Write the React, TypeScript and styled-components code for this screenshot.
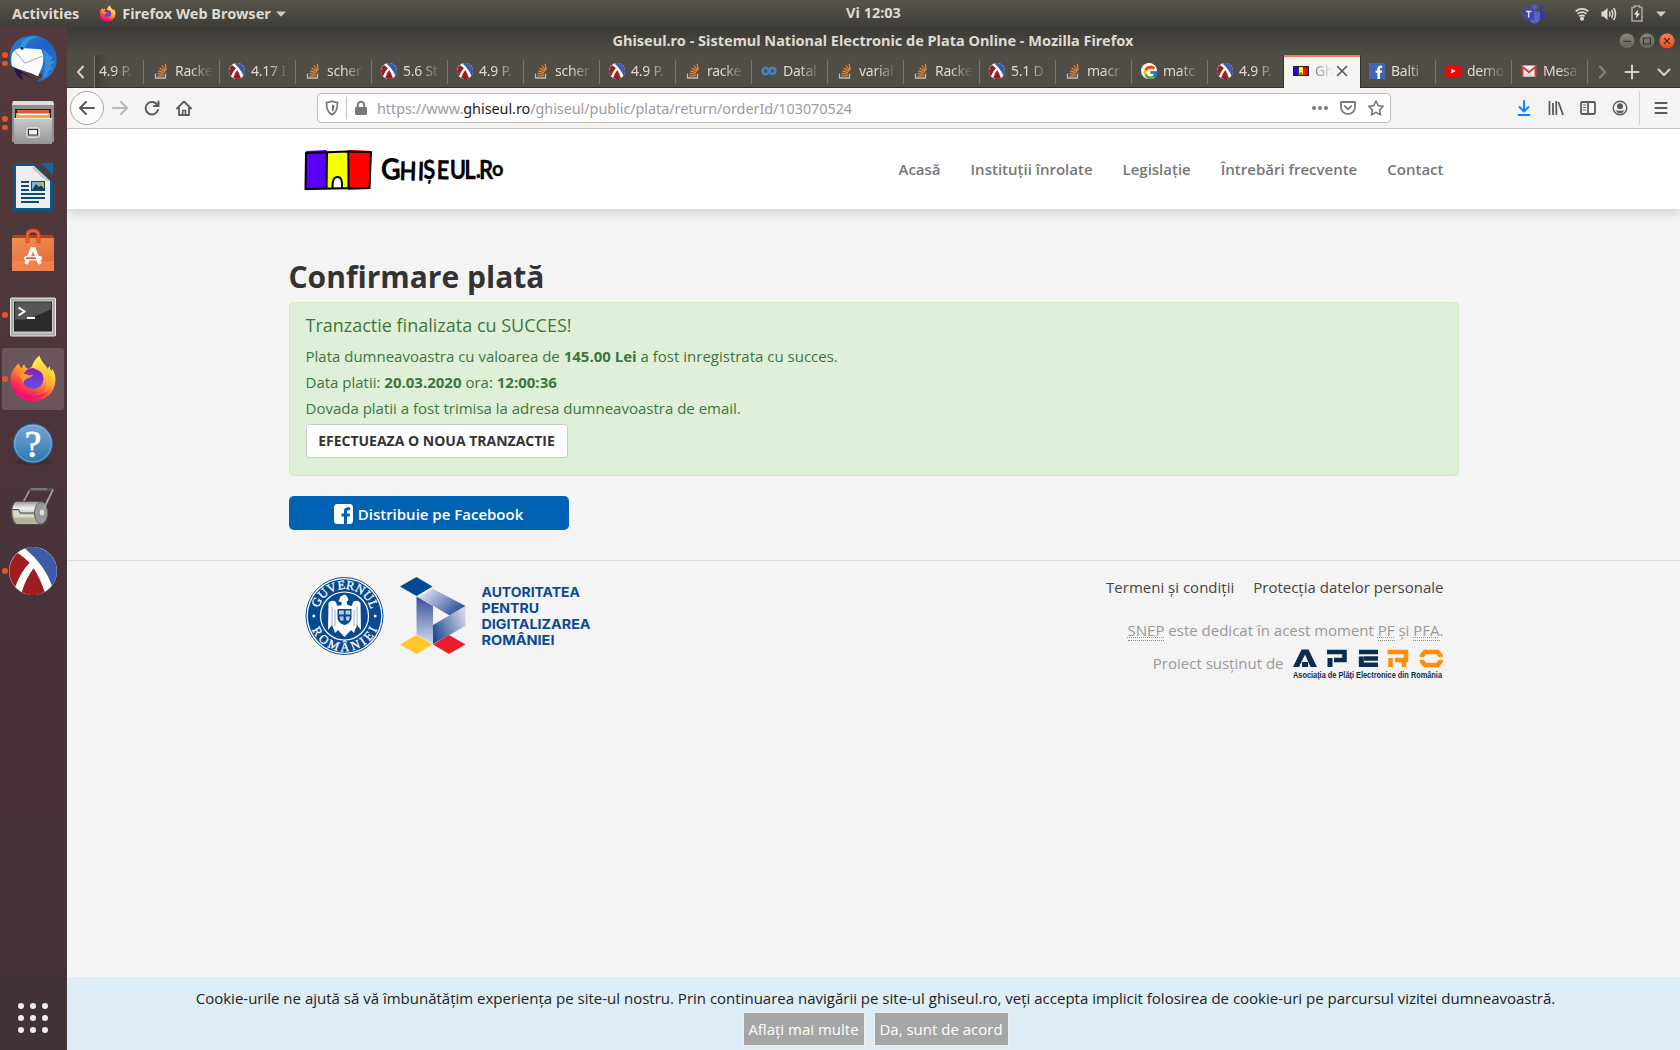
import React from "react";
import styled, { createGlobalStyle } from "styled-components";
import { FcGoogle } from "react-icons/fc";

const Global = createGlobalStyle`
  * { box-sizing: border-box; }
  html, body { margin: 0; padding: 0; }
  body { width: 1680px; height: 1050px; overflow: hidden; font-family: "Open Sans", "Noto Sans", sans-serif; }
  svg { display: block; flex: none; }
`;

const Desktop = styled.div`
  width: 1680px;
  height: 1050px;
  display: flex;
  flex-direction: column;
  background: #f4f4f4;
`;

/* ---------- GNOME top panel ---------- */

const Panel = styled.header`
  height: 27px;
  flex: none;
  display: grid;
  grid-template-columns: 1fr auto 1fr;
  align-items: center;
  padding: 0 14px 0 12px;
  background: linear-gradient(#58554c, #3e3d39);
  color: #dfdbd2;
  font: 700 14.5px/27px "Noto Sans", sans-serif;
`;

const PanelLeft = styled.div`
  display: flex;
  align-items: center;
`;

const PanelText = styled.span`
  white-space: nowrap;
`;

const Clock = styled(PanelText)`
  margin-left: 69px;
  line-height: 25px;
  padding-bottom: 2px;
`;

const PanelRight = styled.div`
  display: flex;
  align-items: center;
  justify-content: flex-end;
`;

const Pad = styled.div<{ $l?: number; $r?: number; $t?: number }>`
  flex: none;
  padding-left: ${(p) => p.$l ?? 0}px;
  padding-right: ${(p) => p.$r ?? 0}px;
  padding-top: ${(p) => p.$t ?? 0}px;
`;

const Body = styled.div`
  flex: 1;
  display: flex;
  min-height: 0;
`;

/* ---------- Dock ---------- */

const Dock = styled.nav`
  width: 67px;
  flex: none;
  display: flex;
  flex-direction: column;
  background: linear-gradient(#543a3c 0%, #4c363a 30%, #47323a 60%, #45313a 90%, #403236 94%, #403236 100%);
`;

const Slot = styled.div<{ $active?: boolean }>`
  width: 62px;
  height: 62px;
  margin: 1px 0 1px 2px;
  border-radius: 3px;
  display: grid;
  grid-template-columns: 7px 48px 7px;
  align-items: center;
  background: ${(p) => (p.$active ? "#6a555a" : "transparent")};
`;

const Running = styled.div`
  display: flex;
  flex-direction: column;
  gap: 3px;
`;

const Dot = styled.i`
  width: 5.5px;
  height: 5.5px;
  border-radius: 50%;
  background: #e95420;
`;

const AppsGrid = styled.div`
  margin: auto 0 17px 18px;
  display: grid;
  grid-template-columns: repeat(3, 6px);
  gap: 6px;
`;

const AppsDot = styled.i`
  width: 6px;
  height: 6px;
  border-radius: 50%;
  background: #eee;
`;

/* ---------- Firefox window ---------- */

const Win = styled.section`
  flex: 1;
  min-width: 0;
  display: flex;
  flex-direction: column;
`;

const TitleBar = styled.div`
  height: 28px;
  flex: none;
  display: grid;
  grid-template-columns: 1fr auto 1fr;
  align-items: center;
  padding: 0 5px;
  background: linear-gradient(#3a3935, #504d46);
  color: #dfdbd2;
  font: 700 14.53px/26px "Noto Sans", sans-serif;
`;

const WinTitle = styled.span`
  padding: 0 1px 2px 0;
  white-space: nowrap;
`;

const WinButtons = styled.div`
  display: flex;
  justify-content: flex-end;
  gap: 4px;
`;

const TabStrip = styled.div`
  height: 33px;
  flex: none;
  display: flex;
  background: #504d46;
  box-shadow: inset 0 -1px 0 #33322f;
  color: #dfdbd2;
`;

const TabScroll = styled.div<{ $w: number; $shadow?: boolean }>`
  width: ${(p) => p.$w}px;
  flex: none;
  display: flex;
  align-items: center;
  justify-content: center;
  border-right: ${(p) => (p.$shadow ? "1px solid #7b7871" : "none")};
`;

const TabBox = styled.div<{ $active?: boolean; $first?: boolean; $last?: boolean }>`
  width: ${(p) => (p.$first ? 49 : 76)}px;
  flex: none;
  display: flex;
  align-items: center;
  padding: 0 0 2px ${(p) => (p.$first ? 4 : 9)}px;
  color: ${(p) => (p.$active ? "#777" : "#dfdbd2")};
  background: ${(p) =>
    p.$active
      ? "linear-gradient(#f27e51 0 2px, #f5f4f3 2px)"
      : p.$first
        ? "linear-gradient(#77746c, #77746c) 100% 5px / 1px 24px no-repeat, linear-gradient(90deg, #403e39, #504d46 12px) 0 0 / 100% 32px no-repeat"
        : p.$last
          ? "none"
          : "linear-gradient(#77746c, #77746c) 100% 5px / 1px 24px no-repeat"};
  box-shadow: ${(p) => (p.$active ? "-1px 0 0 #33322f, 1px 0 0 #33322f" : "none")};
  & > svg { margin-top: 1px; }
`;

const TabLabel = styled.span<{ $w: number; $first?: boolean }>`
  width: ${(p) => p.$w}px;
  margin-left: ${(p) => (p.$first ? 0 : 6)}px;
  overflow: hidden;
  white-space: nowrap;
  font: 400 14px/22px "Noto Sans", sans-serif;
  letter-spacing: -0.25px;
  mask-image: linear-gradient(to left, transparent, #000 22px);
`;

const Toolbar = styled.div`
  height: 41px;
  flex: none;
  display: flex;
  align-items: center;
  background: #f5f4f2;
  border-bottom: 1px solid #c4c0bc;
  padding: 0 11px 0 3px;
`;

const BackButton = styled.div`
  width: 34px;
  height: 34px;
  border-radius: 50%;
  border: 1px solid #a9a7a5;
  background: #fcfcfc;
  display: grid;
  place-items: center;
`;

const UrlBar = styled.div`
  width: 1074px;
  height: 30px;
  margin-left: 125px;
  display: flex;
  align-items: center;
  background: #fff;
  border: 1px solid #bfbbb7;
  border-radius: 4px;
  padding: 0 6px 0 6px;
`;

const UrlSep = styled.i`
  width: 1px;
  height: 22px;
  margin: 0 6px;
  background: #c5c3c1;
`;

const Url = styled.span`
  margin-left: 8px;
  padding-top: 1px;
  font: 400 14.42px/27px "Noto Sans", sans-serif;
  letter-spacing: -0.05px;
  color: #9c9c9c;
  flex: 1;
  & b { font-weight: 400; color: #222; }
`;

const UrlActions = styled.div`
  display: flex;
  align-items: center;
  gap: 12px;
`;

const ToolIcons = styled.div`
  margin-left: auto;
  display: flex;
  align-items: center;
  gap: 16px;
`;

const ToolSep = styled.i`
  width: 1px;
  height: 34px;
  margin: 0 -3px 0 -5px;
  background: #d6d3d0;
`;

/* ---------- Page ---------- */

const Page = styled.div`
  flex: 1;
  min-height: 0;
  display: flex;
  flex-direction: column;
  background: #f4f4f4;
`;

const SiteHeader = styled.div`
  height: 80px;
  flex: none;
  background: #fff;
  box-shadow: 0 2px 12px rgba(0, 0, 0, 0.2);
  clip-path: inset(0 0 -20px 0);
`;

const Container = styled.div`
  width: 1170px;
  margin: 0 auto;
`;

const HeaderRow = styled(Container)`
  height: 80px;
  display: flex;
  align-items: center;
  justify-content: space-between;
  padding: 0 15px 1px;
`;

const Menu = styled.div`
  display: flex;
  gap: 30px;
  font: 600 15px/20px "Open Sans", sans-serif;
  color: #777;
`;

const Heading = styled.h1`
  margin: 48px 0 0;
  font: 700 30px/40px "Open Sans", sans-serif;
  color: #333;
`;

const Alert = styled.div`
  margin-top: 5px;
  height: 174px;
  padding: 10px 16px;
  border: 1px solid #d6e9c6;
  border-radius: 4px;
  background: #dff0d8;
  color: #3c763d;
  font: 400 15px/26px "Open Sans", sans-serif;
`;

const AlertTitle = styled.div`
  font-size: 18px;
  line-height: 24px;
  margin-bottom: 6px;
`;

const Line = styled.p`
  margin: 0;
`;

const NewButton = styled.button`
  display: block;
  width: 262px;
  height: 34px;
  margin: 3px 0 0;
  padding: 0;
  border: 1px solid #ccc;
  border-radius: 3px;
  background: #fff;
  color: #333;
  font: 700 14px/32px "Open Sans", sans-serif;
  white-space: nowrap;
`;

const ShareButton = styled.button`
  width: 280px;
  height: 34px;
  margin-top: 20px;
  padding: 2px 0 0;
  border: 0;
  border-radius: 5px;
  background: #0062b3;
  color: #fff;
  display: flex;
  align-items: center;
  justify-content: center;
  gap: 5px;
  font: 600 15px/32px "Open Sans", sans-serif;
`;

const Footer = styled.footer`
  margin-top: 30px;
  border-top: 1px solid #dedede;
`;

const FooterRow = styled(Container)`
  display: flex;
  justify-content: space-between;
  padding: 16px 15px 0 16px;
`;

const Logos = styled.div`
  display: flex;
  gap: 16px;
`;

const AdrText = styled.div`
  padding-top: 6px;
`;

const FooterRight = styled.div`
  display: flex;
  flex-direction: column;
  align-items: flex-end;
  font: 400 15px/20px "Open Sans", sans-serif;
  color: #999;
`;

const Links = styled.div`
  display: flex;
  gap: 19px;
  color: #444;
`;

const Snep = styled.div`
  margin-top: 23px;
`;

const Abbr = styled.abbr`
  text-decoration: underline dotted 1px;
  border-bottom: 1px dotted #888;
`;

const Sustained = styled.div`
  margin-top: 9px;
  display: flex;
  gap: 9px;
  line-height: 28px;
`;

const CookieBar = styled.div`
  margin-top: auto;
  height: 73px;
  flex: none;
  background: #ddeef6;
  color: #222;
  text-align: center;
  padding: 8px 0 0 4px;
  font: 400 15px/26px "Open Sans", sans-serif;
`;

const CookieButtons = styled.div`
  display: flex;
  justify-content: center;
  gap: 9px;
  padding-top: 1px;
`;

const CookieButton = styled.button<{ $w: number }>`
  width: ${(p) => p.$w}px;
  height: 34px;
  padding: 0;
  border: 1px solid #f0f0f0;
  background: #a6a6a6;
  color: #fff;
  font: 400 15px/30px "Open Sans", sans-serif;
`;

/* ---------- Icons ---------- */

const Racket = ({ s = 16 }: { s?: number }) => (
  <svg width={s} height={s} viewBox="0 0 48 48">
    <circle cx="24" cy="24" r="24" fill="#fff" />
    <path d="M16 1.4A24 24 0 0 1 42.9 38.7Q36 18 16 1.4Z" fill="#3e5ba9" />
    <path d="M8.6 6A24 24 0 0 0 6.2 40Q11.500 25 20.700 15.700Q15 10 8.600 6Z" fill="#9f1d20" />
    <path d="M24.600 21.300Q16.500 32 12.800 45.200A24 24 0 0 0 35.600 45Q31.500 32 24.600 21.300Z" fill="#9f1d20" />
  </svg>
);

const Stack = () => (
  <svg width="16" height="16" viewBox="0 0 16 16" fill="none">
    <path d="M2.500 10.500v4.500h10v-4.500" stroke="#bcbbbb" strokeWidth="1.300" />
    <path d="M4.300 12.800h6.400M4.500 10.400l6.300.7M5.200 7.900l6 1.800M6.600 5.100l5.500 3.300M9 2.600l3.800 5M12.200.8l1.100 6" stroke="#f48024" strokeWidth="1.300" />
  </svg>
);

const Coursera = () => (
  <svg width="16" height="16" viewBox="0 0 16 16" fill="none" stroke="#3f84c9" strokeWidth="2.600">
    <path d="M6.800 10.200C5.300 12 1.600 11.300 1.600 8s3.700-4 5.200-2.200L9 9.800c1.400 2 5.300 1.500 5.300-1.800S10.500 4.200 9.200 6L7 10" />
  </svg>
);

const RoFlag = () => (
  <svg width="16" height="16" viewBox="0 0 16 16">
    <rect x=".5" y="3.500" width="15" height="9" fill="#ff0" stroke="#222" />
    <path d="M1 4h4.500v8H1z" fill="#2200e8" />
    <path d="M10.500 4H15v8h-4.500z" fill="#f00" />
    <path d="M5.500 4v8m5-8v8M7 12v-2h1.800v2" stroke="#222" strokeWidth=".8" fill="none" />
  </svg>
);

const FbTab = () => (
  <svg width="16" height="16" viewBox="0 0 16 16">
    <path fill="#4267b2" d="M0 0h16v16H0z" />
    <path fill="#fff" d="M8.400 16V9.800H6.600V7.400h1.800V5.700c0-2 1.200-3 3-3h1.700v2.200H12c-.9 0-1.100.5-1.100 1.100v1.400h2.200l-.3 2.400h-1.900V16z" />
  </svg>
);

const YouTube = () => (
  <svg width="16" height="16" viewBox="0 0 16 16">
    <rect y="2.300" width="16" height="11.400" rx="2.800" fill="#f00" />
    <path d="M6.300 5.600v4.800L10.600 8z" fill="#fff" />
  </svg>
);

const Gmail = () => (
  <svg width="16" height="16" viewBox="0 0 16 16">
    <rect x="1" y="2.500" width="14" height="11" rx="1" fill="#f2f2f2" />
    <path d="M3 13.500 8 8l5 5.500" fill="#d8d8d8" />
    <path d="M1.500 13V3.800L8 9.300l6.500-5.500V13" fill="none" stroke="#dc3c30" strokeWidth="2" />
  </svg>
);

const GoogleTab = () => (
  <svg width="16" height="16" viewBox="0 0 16 16">
    <circle cx="8" cy="8" r="8" fill="#fff" />
    <FcGoogle x="1.500" y="1.500" width="13" height="13" />
  </svg>
);

const Firefox = ({ s }: { s: number }) => (
  <svg width={s} height={s} viewBox="0 0 48 48">
    <defs>
      <linearGradient id={`fa${s}`} x1=".85" y1=".1" x2=".25" y2="1">
        <stop offset="0" stopColor="#fff44f" />
        <stop offset=".35" stopColor="#ffa436" />
        <stop offset=".6" stopColor="#ff5634" />
        <stop offset=".85" stopColor="#f5156c" />
      </linearGradient>
      <linearGradient id={`fb${s}`} x1=".5" y1="0" x2=".3" y2="1">
        <stop offset="0" stopColor="#8a1fb8" />
        <stop offset="1" stopColor="#5b55e8" />
      </linearGradient>
      <linearGradient id={`fc${s}`} x1=".5" y1="0" x2=".6" y2="1">
        <stop offset="0" stopColor="#fff44f" />
        <stop offset="1" stopColor="#ff9a28" />
      </linearGradient>
    </defs>
    <path d="M9.500 8.500c1 2.500 2 3.700 3.500 4.700.3-1.800 1-3 2.300-4.200.4 2.500 1.500 4 4 5L31 6c2 2.500 5 5 7 9l2.500-4c.5 2 .8 3.500 1.700 5l1.300-2C46 18 46.500 22 46.500 25a22.500 21.500 0 0 1-45 0c0-7 3.500-12 8-16.500Z" fill={`url(#fa${s})`} />
    <circle cx="24" cy="23.500" r="10.500" fill={`url(#fb${s})`} />
    <path d="M22.500 12.500C24 7 27 3 30.500.5 31.500 6 36 9 39 14c5 8 3 19-4 23 5-8 2-17-3-20-3-2-6-3.500-9.500-4.500Z" fill={`url(#fc${s})`} />
    <path d="M8 19.500c4-1.500 8-1 11 .5 2 1 3.500 0 5-.2-1.500 3-4.500 3-6.500 4-2 1-2.500 2.500-3 4.200-1-4-3.500-6.500-6.500-8.500Z" fill="#ff9a1f" />
    <path d="M3 31c5 13 25 18 38 4-8 7-28 10-38-4Z" fill="#e8127a" opacity=".8" />
  </svg>
);

const Thunderbird = () => (
  <svg width="48" height="48" viewBox="0 0.800 48 48">
    <defs>
      <linearGradient id="tb" x1="0" y1="0" x2="1" y2="1">
        <stop offset="0" stopColor="#2b7fd6" />
        <stop offset=".5" stopColor="#2060c4" />
        <stop offset="1" stopColor="#2a7bd0" />
      </linearGradient>
    </defs>
    <path d="M5 33c1 6 4 11 9 13l-2-7 14 6Z" fill="#261659" />
    <path d="M12 4C22-1 36 1 43 11c7 9 6 22-1 29-4 5-9 7-15 7 5-2 6-4 7-7L2 32C-2 20 3 8 12 4Z" fill="url(#tb)" />
    <path d="M11 13C13 4 22 0 31 3c-8 0-13 4-15 10L11 22l-5-3Z" fill="#3498d8" />
    <path d="M33 14c5 3 8 9 11 9l-3 4 5 0-5 5 3 2-6 4 1 3-6 3c4-9 4-19 0-30Z" fill="#3b98dc" opacity=".8" />
    <path d="M3 20c2-5 7-7 12-6l17 1c3 5 3 12 1 18l-4 9c-8-4-18-6-26-10-1-4-1-8 0-12Z" fill="#fbfbfb" />
    <path d="m6 17 10 12 17-7" fill="none" stroke="#999" strokeWidth=".9" />
    <circle cx="13" cy="14" r="1.500" fill="#142850" />
  </svg>
);

const Files = () => (
  <svg width="48" height="48" viewBox="0 0 48 48">
    <defs>
      <linearGradient id="fi" x1="0" y1="0" x2="0" y2="1">
        <stop offset="0" stopColor="#c9c9c9" />
        <stop offset="1" stopColor="#959595" />
      </linearGradient>
    </defs>
    <path d="M4 2h40l1 4v37H3V6z" fill="#8e8e8e" />
    <path d="M4 2h40l1 4H3z" fill="#dedede" />
    <path d="M6 10h36v12H6z" fill="#242424" />
    <path d="M8 11h32v9H8z" fill="#e0592a" />
    <path d="M7 14h34v6H7z" fill="#f6a64b" />
    <path d="M9 15h30v1H9z" fill="#fff" />
    <path d="M5 19h38v26H5z" fill="url(#fi)" />
    <path d="M5 19h38v1H5z" fill="#eee" />
    <rect x="17.500" y="28.500" width="13" height="10" rx="2" fill="#bbb" stroke="#dcdcdc" />
    <rect x="19.500" y="30.500" width="9" height="5.500" fill="#eee" stroke="#333" />
  </svg>
);

const Writer = () => (
  <svg width="48" height="48" viewBox="0 0 48 48">
    <path d="M6 0h19l19 19v27a2 2 0 0 1-2 2H6a2 2 0 0 1-2-2V2a2 2 0 0 1 2-2Z" fill="#0b5687" />
    <path d="M32 0h12v12Z" fill="#0b6aa5" />
    <path d="M7 3h18l16 15v27H7z" fill="#eee" />
    <path d="m25 3 16 15h-4L23 5Z" fill="#c9c9c9" />
    <path d="M12 19h8m-8 4h8m-8 4h8m-8 4h24m-24 4h24m-24 4h18" stroke="#0b4c76" strokeWidth="2" />
    <path d="M22 18h14v10H22z" fill="#0b4c76" />
    <path d="M23 19h12v8H23z" fill="#79b9df" />
    <path d="m23 27 4-6 3 3 2-2 3 4v1Z" fill="#333" />
    <circle cx="33" cy="21" r="2" fill="#d9b42c" />
  </svg>
);

const Software = () => (
  <svg width="48" height="48" viewBox="0 -1 48 48">
    <defs>
      <linearGradient id="sw" x1="0" y1="0" x2=".5" y2="1">
        <stop offset="0" stopColor="#ec9353" />
        <stop offset="1" stopColor="#ea6a35" />
      </linearGradient>
    </defs>
    <path d="M4 7h40l1 5H3z" fill="#b83d15" />
    <path d="M3 10h42v33H3z" fill="url(#sw)" />
    <path d="M3 33h42v10H3z" fill="#f5864f" opacity=".8" />
    <path d="M18.500 15V7q0-4.500 5.500-4.500T29.500 7v8" fill="none" stroke="#c84a1e" strokeWidth="4" />
    <path d="M18.500 14V7q0-4 5.500-4t5.500 4v7" fill="none" stroke="#f0652f" strokeWidth="2" />
    <path d="m17 36 6-15h2l6 15" fill="none" stroke="#fff" strokeWidth="3.600" />
    <rect x="15" y="28" width="18" height="4.500" rx="2.200" fill="#fff" />
    <path d="M17 30.200h10" stroke="#e05c28" strokeWidth="1.800" />
  </svg>
);

const Terminal = () => (
  <svg width="48" height="48" viewBox="0 -1.500 48 48">
    <rect x="1.500" y="5.500" width="45" height="38" rx="1" fill="#aaa" stroke="#e9e9e9" />
    <path d="M4 8h40v33H4z" fill="#c9c9c9" />
    <path d="M5 9h38v30H5z" fill="#2a2a2a" />
    <path d="M6 10h36v7L18 27H6z" fill="#565656" />
    <path d="m9.500 15 6 4-6 4M18 25.500h8" fill="none" stroke="#fff" strokeWidth="2" />
  </svg>
);

const HelpText = styled.text`
  font: 400 37px "Liberation Serif", serif;
`;

const Help = () => (
  <svg width="48" height="48" viewBox="0 0 48 48">
    <defs>
      <linearGradient id="hp" x1="0" y1="0" x2="0" y2="1">
        <stop offset="0" stopColor="#7ba5da" />
        <stop offset="1" stopColor="#2d76b0" />
      </linearGradient>
    </defs>
    <ellipse cx="24" cy="43" rx="19" ry="3" fill="#000" opacity=".15" />
    <circle cx="24" cy="24.500" r="19.500" fill="url(#hp)" stroke="#2864a0" />
    <circle cx="24" cy="24.500" r="18.300" fill="none" stroke="#9bc0e8" strokeWidth=".8" opacity=".8" />
    <HelpText x="24" y="37.500" textAnchor="middle" fill="#fff" stroke="#fff" strokeWidth=".8">?</HelpText>
  </svg>
);

const Roller = () => (
  <svg width="48" height="48" viewBox="0 -2.500 48 48">
    <defs>
      <linearGradient id="rl" x1="0" y1="0" x2="0" y2="1">
        <stop offset="0" stopColor="#999" />
        <stop offset=".3" stopColor="#f0f0f0" />
        <stop offset="1" stopColor="#777" />
      </linearGradient>
    </defs>
    <path d="M14 17 21 4M44 4 33 27" stroke="#656860" strokeWidth="2.200" fill="none" />
    <path d="m14 17 7-13M44 4 33 27" stroke="#b9bbb5" strokeWidth=".9" fill="none" />
    <path d="M20 4h25" stroke="#555" strokeWidth="3" />
    <path d="M22 3.500h16" stroke="#999" strokeWidth="1" />
    <path d="M7 16h26c7 3 7 20-1 23H7C1 36 1 19 7 16Z" fill="url(#rl)" stroke="#555" />
    <path d="M2.500 24h7l2 3.500H27c0 6 2 9 4 11.500H8C4 37 2.500 31 2.500 24Z" fill="#b4b597" stroke="#4c4c40" />
    <path d="M4 25.500h5l2 3.500h14v3H5Z" fill="#dcdccb" />
    <ellipse cx="32" cy="27.500" rx="6.500" ry="11" fill="#989898" stroke="#666" />
    <path d="M44 4 33 27" stroke="#a5a7a1" strokeWidth="1.500" />
    <ellipse cx="33" cy="27" rx="2.200" ry="3" fill="#ddd" />
  </svg>
);

const Teams = () => (
  <svg width="22" height="20" viewBox="0 0 22 20">
    <circle cx="11.500" cy="3.200" r="3" fill="#5059c9" />
    <circle cx="18.500" cy="4" r="2.200" fill="#3b3f9f" />
    <path d="M16 7.500h6V13q-1 4-5 3z" fill="#353a96" />
    <path d="M8 7.500h9V14q-.5 5.500-5.500 5.500T7 15Z" fill="#5a62c9" />
    <path d="M0 4.500h11V16H0z" fill="#4044b2" />
    <path d="M3 7.500h5.500M5.700 7.500v6" stroke="#ddd" strokeWidth="1.500" />
  </svg>
);

const Wifi = () => (
  <svg width="14" height="14" viewBox="0 0 14 14" fill="none" stroke="#dfdbd2" strokeWidth="1.700">
    <path d="M.7 4.200q6.300-4.600 12.600 0M2.500 6.800q4.500-3.200 9 0M4.300 9.300q2.700-1.800 5.400 0" />
    <circle cx="7" cy="11.800" r="1.200" fill="#dfdbd2" />
  </svg>
);

const Sound = () => (
  <svg width="16" height="14" viewBox="0 0 16 14" fill="none" stroke="#dfdbd2" strokeWidth="1.500">
    <path d="M.5 4.500h2L6.500 1v12l-4-3.500h-2z" fill="#dfdbd2" stroke="none" />
    <path d="M8.300 4.500q1.400 2.500 0 5M10.500 2.800q2.500 4.200 0 8.400M12.700 1q3.600 6 0 12" />
  </svg>
);

const Battery = () => (
  <svg width="12" height="17" viewBox="0 0 12 17" fill="none">
    <path d="M3.500 2.500V1h5v1.500H11V16H1V2.500Z" stroke="#a9a69f" strokeWidth="1.600" />
    <path d="M7 4.500 3 9.500h2.500L5 13.500l4-5H6.500Z" fill="#eee" />
  </svg>
);

const Caret = () => (
  <svg width="10" height="6" viewBox="0 0 10 6">
    <path d="M0 .5h10L5 5.800z" fill="#cfccc4" />
  </svg>
);

const WinBtn = ({ kind }: { kind: "min" | "max" | "close" }) => (
  <svg width="16" height="16" viewBox="0 0 16 16">
    <defs>
      <linearGradient id={`wb-${kind}`} x1="0" y1="0" x2="0" y2="1">
        <stop offset="0" stopColor={kind === "close" ? "#f4845f" : "#8b8881"} />
        <stop offset="1" stopColor={kind === "close" ? "#df4a17" : "#605e58"} />
      </linearGradient>
    </defs>
    <circle cx="8" cy="8" r="7.800" fill={`url(#wb-${kind})`} stroke="#35342f" strokeWidth=".4" />
    <g fill="none" stroke={kind === "close" ? "#5c1d08" : "#33322e"} strokeWidth="1.100">
      {kind === "min" && <path d="M4 8.300h8" />}
      {kind === "max" && <path d="M4.500 5h7v6h-7z" />}
      {kind === "close" && <path d="m5.200 5.200 5.600 5.600m0-5.600-5.600 5.600" />}
    </g>
  </svg>
);

const Stroke = ({ d, s = 16, c = "#5a5a59", w = 2, children }: { d: string; s?: number; c?: string; w?: number; children?: React.ReactNode }) => (
  <svg width={s} height={s} viewBox="0 0 16 16" fill="none" stroke={c} strokeWidth={w} strokeLinecap="round" strokeLinejoin="round">
    <path d={d} />
    {children}
  </svg>
);

const LogoText = styled.text<{ $size: number }>`
  font: 700 ${(p) => p.$size}px "Lato", sans-serif;
  stroke: #000;
  stroke-width: 0.3px;
  stroke-linejoin: round;
`;

const SiteLogo = () => (
  <svg width="204" height="44" viewBox="0 0 204 44">
    <path d="M2 4 23 3v39L1 43Z" fill="#5a00ff" />
    <path d="M23 4h21v37H23z" fill="#f8ff00" />
    <path d="m44 3 23 1-1 38-22 1Z" fill="#f00" />
    <path d="M29 40v-4q0-6 4.500-6t4.500 6v4Z" fill="#fff" />
    <path d="M2 6 44 4.500 67 5l-1.500 36-22 .3L1.500 42ZM23 5.500 22.500 41M44.300 5l.2 36M28.500 40.500q-.3-10.500 5-10.500t4.500 10.500" fill="none" stroke="#000" strokeWidth="2" strokeLinejoin="round" />
    <LogoText $size={29} transform="translate(77.500 33) rotate(-3) scale(.93 1)">G</LogoText>
    <LogoText $size={26} transform="scale(.85 1)" x="112 133.500 140.500 156 171.500 188.500 202 206" y="33 33.500 32 32 32 32 31.500 32.500" rotate="2 2 -2 1 0 0 0 0">HIȘEUL.R</LogoText>
    <LogoText $size={20} x="188" y="29">o</LogoText>
  </svg>
);

const FbShare = () => (
  <svg width="19" height="20" viewBox="0 0 19 20">
    <path fill="#fff" fillRule="evenodd" d="M3.500 0h12A3.500 3.500 0 0 1 19 3.500v13a3.500 3.500 0 0 1-3.500 3.500H13v-7.500h2.700l.4-3H13V7.700c0-.9.400-1.500 1.600-1.500h1.600V3.500q-1-.2-2.300-.2C11.400 3.300 10 4.700 10 7.300v2.200H7.500v3H10V20H3.500A3.500 3.500 0 0 1 0 16.500v-13A3.500 3.500 0 0 1 3.500 0Z" />
  </svg>
);

const SealText = styled.text`
  font: 400 12.5px "Liberation Serif", serif;
  stroke: #fff;
  stroke-width: 0.3px;
`;

const Seal = () => (
  <svg width="79" height="79" viewBox="0 .5 79 79">
    <defs>
      <path id="arcTop" d="M12.500 39.500a27 27 0 0 1 54 0" />
      <path id="arcBot" d="M4.300 39.500a35.200 35.200 0 0 0 70.400 0" />
    </defs>
    <circle cx="39.500" cy="39.500" r="38.500" fill="#fff" stroke="#084a92" />
    <circle cx="39.500" cy="39.500" r="36.700" fill="#084a92" />
    <circle cx="39.500" cy="39.500" r="24" fill="#084a92" stroke="#fff" strokeWidth="1.200" />
    <SealText fill="#fff"><textPath href="#arcTop" startOffset="8" textLength="70">GUVERNUL</textPath></SealText>
    <SealText fill="#fff"><textPath href="#arcBot" startOffset="14" textLength="83">ROMÂNIEI</textPath></SealText>
    <circle cx="8.800" cy="39.500" r="1.500" fill="#fff" />
    <circle cx="70.200" cy="39.500" r="1.500" fill="#fff" />
    <path d="M39.500 18l2.500 1.500 1.500 4-2 2 1 3 4 1 2-4.500q4.500-2 7 1.500l.5 27-4-5-2 5-1 3-3-3-6.500 7-6.500-7-3 3-1-3-2-5-4 5 .5-27q2.500-3.500 7-1.500l2 4.500 4-1 0-3-3-.5 2-5Z" fill="#fff" />
    <path d="M32.500 32.500h14v10q-2 5-7 6-5-1-7-6Z" fill="#084a92" />
    <path d="M34 34h4.800v4H34zM40.500 34h4.800v4h-4.800zM34.500 40h4v4h-3zM41 40h4l-1 4h-3z" fill="#b8cbe0" />
    <path d="M27 30v20m3-17v17M52 30v20m-3-17v17" stroke="#6f94bf" strokeWidth=".7" />
  </svg>
);

const AdrMark = () => (
  <svg width="66" height="78" viewBox="0 0 66 78">
    <defs>
      <linearGradient id="ad1" x1="0" y1=".2" x2="1" y2=".8">
        <stop offset="0" stopColor="#e4e6f3" />
        <stop offset="1" stopColor="#1f4796" />
      </linearGradient>
      <linearGradient id="ad2" x1="0" y1="0" x2="0" y2="1">
        <stop offset="0" stopColor="#31509c" />
        <stop offset="1" stopColor="#d5d9ec" />
      </linearGradient>
      <linearGradient id="ad3" x1="0" y1=".8" x2="1" y2=".3">
        <stop offset="0" stopColor="#1f4796" />
        <stop offset="1" stopColor="#cfd3e8" />
      </linearGradient>
    </defs>
    <path d="m16.500 0 16 9.500-16 9.500L0 9.500Z" fill="#004a93" />
    <path d="m32.500 11.500 33 17.500-16 9.500-31-18.500Z" fill="url(#ad1)" />
    <path d="m16.500 19.500 16.500 9.500v38l-16.500-9.500Z" fill="url(#ad2)" />
    <path d="M65.500 29v20L33 67V48Z" fill="url(#ad3)" />
    <path d="m16.500 58 16 9.500-16 9.500L0 67.500Z" fill="#ffc72c" />
    <path d="m49 58 16.500 9.500L49 77l-16-9.500Z" fill="#ea1d2c" />
  </svg>
);

const AdrLine = styled.text`
  font: 700 13.3px "Inter", "Lato", sans-serif;
`;

const AdrName = () => (
  <svg width="112" height="70" viewBox="0 0 112 70" fill="#084a92">
    <AdrLine x="-.5" y="13.500" textLength="98.500" lengthAdjust="spacingAndGlyphs">AUTORITATEA</AdrLine>
    <AdrLine x="-.5" y="29.500" textLength="57.500" lengthAdjust="spacingAndGlyphs">PENTRU</AdrLine>
    <AdrLine x="-.5" y="45.500" textLength="109" lengthAdjust="spacingAndGlyphs">DIGITALIZAREA</AdrLine>
    <AdrLine x="-.5" y="61.500" textLength="73" lengthAdjust="spacingAndGlyphs">ROMÂNIEI</AdrLine>
  </svg>
);

const ApeCaption = styled.text`
  font: 700 8.200px "Liberation Sans", sans-serif;
`;

const Apero = () => (
  <svg width="151" height="32" viewBox="0 0 151 32">
    <g fill="none" stroke="#0b2d52" strokeWidth="5">
      <path d="M0 18 8.500.500h7L24 18h-6.500L12 5.500 6 18Z" fill="#0b2d52" stroke="none" />
      <path d="M9 13h6v5H9z" fill="#0b2d52" stroke="none" />
      <path d="M34 3h17.500v8H41" strokeWidth="4.600" />
      <path d="M37 9v9" strokeWidth="5" />
      <path d="M66 3h19M71 9.500h14M66 15.800h19" strokeWidth="4.400" />
      <path d="M68.300 7.500v10" />
    </g>
    <g fill="none" stroke="#ff8e0a" strokeWidth="4.600">
      <path d="M94.500 3h18.500v8H102M97.500 9v9M111 10v8" />
      <path d="M129 8V6.500L132 3h12.500l3 3.500V8M129 11v1.500l3 3.500h12.500l3-3.500V11" />
    </g>
    <ApeCaption x="0" y="28.500" textLength="149" lengthAdjust="spacingAndGlyphs" fill="#0b2d52">Asociația de Plăți Electronice din România</ApeCaption>
  </svg>
);

/* ---------- Data ---------- */

const ICONS: Record<string, React.ReactNode> = {
  stack: <Stack />,
  racket: <Racket />,
  coursera: <Coursera />,
  google: <GoogleTab />,
  ro: <RoFlag />,
  fb: <FbTab />,
  yt: <YouTube />,
  gmail: <Gmail />,
};

const TABS: [string, string][] = [
  ["stack", "Racke"],
  ["racket", "4.17 I"],
  ["stack", "scher"],
  ["racket", "5.6 St"],
  ["racket", "4.9 P."],
  ["stack", "scher"],
  ["racket", "4.9 P."],
  ["stack", "racke"],
  ["coursera", "Datal"],
  ["stack", "varial"],
  ["stack", "Racke"],
  ["racket", "5.1 D"],
  ["stack", "macr"],
  ["google", "matc"],
  ["racket", "4.9 P."],
  ["ro", "Gh"],
  ["fb", "Balti"],
  ["yt", "demo"],
  ["gmail", "Mesa"],
];

const DOCK: [React.ReactNode, number][] = [
  [<Thunderbird />, 2],
  [<Files />, 2],
  [<Writer />, 0],
  [<Software />, 0],
  [<Terminal />, 1],
  [<Firefox s={48} />, 1],
  [<Help />, 0],
  [<Roller />, 0],
  [<Racket s={48} />, 1],
];

export default function App() {
  return (
    <Desktop>
      <Global />
      <Panel>
        <PanelLeft>
          <PanelText>Activities</PanelText>
          <Pad $l={20} $r={6}><Firefox s={17} /></Pad>
          <PanelText>Firefox Web Browser</PanelText>
          <Pad $l={5}><Caret /></Pad>
        </PanelLeft>
        <Clock>Vi 12:03</Clock>
        <PanelRight>
          <Teams />
          <Pad $l={30}><Wifi /></Pad>
          <Pad $l={12}><Sound /></Pad>
          <Pad $l={14}><Battery /></Pad>
          <Pad $l={13}><Caret /></Pad>
        </PanelRight>
      </Panel>
      <Body>
        <Dock>
          {DOCK.map(([icon, dots], i) => (
            <Slot key={i} $active={i === 5}>
              <Running>
                {Array.from({ length: dots }, (_, k) => <Dot key={k} />)}
              </Running>
              {icon}
            </Slot>
          ))}
          <AppsGrid>
            {Array.from({ length: 9 }, (_, k) => <AppsDot key={k} />)}
          </AppsGrid>
        </Dock>
        <Win>
          <TitleBar>
            <span />
            <WinTitle>Ghiseul.ro - Sistemul National Electronic de Plata Online - Mozilla Firefox</WinTitle>
            <WinButtons>
              <WinBtn kind="min" />
              <WinBtn kind="max" />
              <WinBtn kind="close" />
            </WinButtons>
          </TitleBar>
          <TabStrip>
            <TabScroll $w={28} $shadow><Stroke d="M10 2.500 5 8l5 5.500" c="#d5d1c8" /></TabScroll>
            <TabBox $first><TabLabel $w={37} $first>4.9 P.</TabLabel></TabBox>
            {TABS.map(([icon, label], i) => (
              <TabBox key={i} $active={i === 15} $last={i === 14}>
                {ICONS[icon]}
                <TabLabel $w={i === 15 ? 19 : 38}>{label}</TabLabel>
                {i === 15 && <Pad><Stroke d="M3.500 3.500l9 9m0-9-9 9" c="#555" w={1.6} /></Pad>}
              </TabBox>
            ))}
            <TabScroll $w={28}><Stroke d="M6 2.500 11 8l-5 5.500" c="#88857d" /></TabScroll>
            <TabScroll $w={31}><Stroke d="M8 1.500v13M1.500 8h13" c="#d5d1c8" /></TabScroll>
            <TabScroll $w={33}><Stroke d="M2.500 5.500 8 11l5.500-5.500" c="#d5d1c8" /></TabScroll>
          </TabStrip>
          <Toolbar>
            <BackButton><Stroke d="M15 8H1.500M7 2 1 8l6 6" /></BackButton>
            <Pad $l={8}><Stroke d="M1 8h13.500M9 2l6 6-6 6" c="#b9b8b7" /></Pad>
            <Pad $l={16}><Stroke d="M13.500 5.200A6.300 6.300 0 1 0 14 10M14.500 1.500V6H10" /></Pad>
            <Pad $l={16}>
              <Stroke d="M1 8.500 8 1.500l7 7M3 7.500V15h10V7.500" w={1.8}><path d="M6.700 15v-4.500h2.800V15" strokeWidth="1.500" /></Stroke>
            </Pad>
            <UrlBar>
              <svg width="16" height="16" viewBox="0 0 16 16" fill="none" stroke="#777" strokeWidth="1.700">
                <path d="M8 1.300C6 2.200 4.200 2.500 2.500 2.500 2.400 8.500 3.500 12.500 8 14.800c4.500-2.300 5.600-6.300 5.500-12.300C11.800 2.500 10 2.200 8 1.300Z" />
                <path d="M8 4.500v7.400C9.900 10.500 10.500 8.500 10.500 5.200Z" fill="#777" stroke="none" />
              </svg>
              <UrlSep />
              <svg width="16" height="16" viewBox="0 0 16 16">
                <rect x="2" y="7" width="12" height="8" rx="1.300" fill="#777" />
                <path d="M4.800 8V5a3.200 3.200 0 0 1 6.400 0v3" fill="none" stroke="#777" strokeWidth="2" />
              </svg>
              <Url>https://www.<b>ghiseul.ro</b>/ghiseul/public/plata/return/orderId/103070524</Url>
              <UrlActions>
                <svg width="16" height="16" viewBox="0 0 16 16" fill="#777">
                  <circle cx="2" cy="8" r="2" /><circle cx="8" cy="8" r="2" /><circle cx="14" cy="8" r="2" />
                </svg>
                <Stroke d="M1 2h14v5.500a7 6.500 0 0 1-14 0ZM4.800 6.200 8 9.300l3.200-3.100" c="#777" w={1.8} />
                <Stroke d="m8 1 2.200 4.600 5 .7-3.600 3.500.9 5L8 12.400l-4.500 2.400.9-5L.8 6.300l5-.7Z" c="#777" w={1.600} />
              </UrlActions>
            </UrlBar>
            <ToolIcons>
              <Stroke d="M8 1v10M3.500 7 8 11.500 12.500 7M2.500 15h11" c="#0a84ff" />
              <svg width="16" height="16" viewBox="0 0 16 16" fill="none" stroke="#5a5a59" strokeWidth="1.800">
                <path d="M1.500 1v14M5 3v12M8.300 1v14M10.500 2l4.500 13" />
              </svg>
              <Stroke d="M2.500 2h11q1.500 0 1.500 1.500v9q0 1.500-1.500 1.500h-11Q1 14 1 12.500v-9Q1 2 2.500 2ZM8 2v12" w={1.800}>
                <path d="M3.500 5h2m-2 2.500h2m-2 2.500h2" strokeWidth="1" />
              </Stroke>
              <svg width="16" height="16" viewBox="0 0 16 16">
                <circle cx="8" cy="8" r="6.800" fill="none" stroke="#5a5a59" strokeWidth="1.400" />
                <circle cx="8" cy="6.200" r="3" fill="#5a5a59" />
                <path d="M3.800 10.200Q8 11.500 12.200 10.200 11 13.300 8 13.300T3.800 10.200Z" fill="#5a5a59" />
              </svg>
              <ToolSep />
              <Stroke d="M2.500 3h11M2.500 8h11M2.500 13h11" />
            </ToolIcons>
          </Toolbar>
          <Page>
            <SiteHeader>
              <HeaderRow>
                <SiteLogo />
                <Menu>
                  <span>Acasă</span>
                  <span>Instituții înrolate</span>
                  <span>Legislație</span>
                  <span>Întrebări frecvente</span>
                  <span>Contact</span>
                </Menu>
              </HeaderRow>
            </SiteHeader>
            <Container>
              <Heading>Confirmare plată</Heading>
              <Alert>
                <AlertTitle>Tranzactie finalizata cu SUCCES!</AlertTitle>
                <Line>Plata dumneavoastra cu valoarea de <b>145.00 Lei</b> a fost inregistrata cu succes.</Line>
                <Line>Data platii: <b>20.03.2020</b> ora: <b>12:00:36</b></Line>
                <Line>Dovada platii a fost trimisa la adresa dumneavoastra de email.</Line>
                <NewButton>EFECTUEAZA O NOUA TRANZACTIE</NewButton>
              </Alert>
              <ShareButton><FbShare />Distribuie pe Facebook</ShareButton>
            </Container>
            <Footer>
              <FooterRow>
                <Logos>
                  <Seal />
                  <AdrMark />
                  <AdrText><AdrName /></AdrText>
                </Logos>
                <FooterRight>
                  <Links><span>Termeni și condiții</span><span>Protecția datelor personale</span></Links>
                  <Snep><Abbr>SNEP</Abbr> este dedicat în acest moment <Abbr>PF</Abbr> și <Abbr>PFA</Abbr>.</Snep>
                  <Sustained><span>Proiect susținut de</span><Apero /></Sustained>
                </FooterRight>
              </FooterRow>
            </Footer>
            <CookieBar>
              Cookie-urile ne ajută să vă îmbunătățim experiența pe site-ul nostru. Prin continuarea navigării pe site-ul ghiseul.ro, veți accepta implicit folosirea de cookie-uri pe parcursul vizitei dumneavoastră.
              <CookieButtons>
                <CookieButton $w={122}>Aflați mai multe</CookieButton>
                <CookieButton $w={135}>Da, sunt de acord</CookieButton>
              </CookieButtons>
            </CookieBar>
          </Page>
        </Win>
      </Body>
    </Desktop>
  );
}
